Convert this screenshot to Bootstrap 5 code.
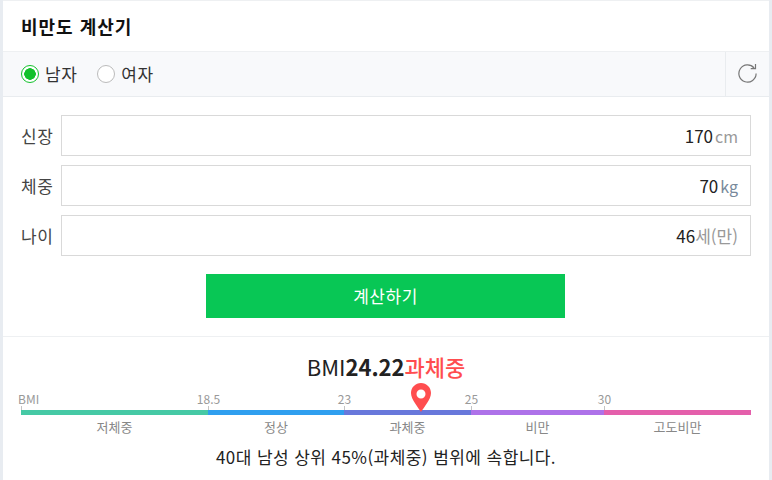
<!DOCTYPE html>
<html lang="ko">
<head>
<meta charset="utf-8">
<title>비만도 계산기</title>
<link href="https://cdn.jsdelivr.net/npm/bootstrap@5.3.0/dist/css/bootstrap.min.css" rel="stylesheet">
<style>
html,body{height:480px;overflow:hidden}
body{background:#e8ecf1;font-family:"Noto Sans CJK KR","Noto Sans",sans-serif;color:#222;padding:0 3px}
.calc{background:#fff;border-top:1px solid #eef0f2;height:481px}
.calc-head{height:50px;padding:0 18px;border-bottom:1px solid #eef0f2;box-sizing:content-box}
.calc-title{margin:0;font-size:18px;letter-spacing:1px;font-weight:700;line-height:50px;color:#111}
.calc-bar{height:45px;background:#f8f9fb;border-bottom:1px solid #e9ecef}
.calc-radios{padding-left:18px;gap:20px}
.calc-radios .form-check{margin:0;padding:0;min-height:0;display:flex;align-items:center;gap:6px}
.calc-radios .form-check-input{float:none;margin:0;width:18px;height:18px;border:1px solid #bbb;background-color:#fff;box-shadow:none}
.calc-radios .form-check-input:checked{border-color:#12c12b;background-color:#fff;background-image:radial-gradient(circle at center,#12c12b 0,#12c12b 5.5px,transparent 6px)}
.calc-radios .form-check-label{font-size:17px;letter-spacing:.5px;line-height:20px;color:#333}
.calc-reset{width:44px;border:0;border-left:1px solid #e9ecef;background:none;padding:0}
.calc-form{padding:18px 18px 0;gap:9px}
.calc-label{width:40px;flex:none;font-size:17px;letter-spacing:.5px;color:#444;margin:0;padding-top:1px}
.calc-field{flex:1;height:41px;border:1px solid #d9d9d9;padding:0 12px 0 0;gap:2px;background:#fff}
.calc-field input{flex:1;min-width:0;border:0;outline:0;padding:0;text-align:right;font-size:17px;color:#222;background:none;box-shadow:none;border-radius:0}
.calc-unit{font-size:16px;color:#999}
.calc-unit-blue{color:#78899b}
.calc-unit-age{font-size:17px;margin-left:-2px}
.calc-submit{width:359px;height:44px;background:#08c755;color:#fff;border:0;border-radius:0;font-size:17px;letter-spacing:.5px;padding:0}
.calc-submit:hover{background:#08c755;color:#fff}
.calc-actions{margin-top:18px;padding:0 1px 18px 0;border-bottom:1px solid #eef0f2}
.calc-result{padding:0 18px}
.calc-bmi{margin:16px 0 0;font-size:22px;line-height:26px;font-weight:400;color:#222}
.calc-bmi b{font-weight:700}
.calc-bmi em{font-style:normal;font-weight:500;color:#ff4d4f}
.scale{position:relative;margin-top:11px}
.scale-cell{flex:none}
.scale-tick{height:20px;font-size:12px;line-height:14px;color:#999;border-left:1px solid #c4c4c4;padding:0}
.scale-tick span{display:inline-block;transform:translateX(-50%);margin-left:-.5px;background:#fff;height:16px;padding-top:2px}
.scale-tick .scale-first{transform:translateX(-3px);margin-left:-1px}
.scale-line{height:5px}
.scale-name{font-size:13px;line-height:16px;color:#888;margin-top:4px;text-align:center}
.c1{background:#46c9a5}.c2{background:#2f9fef}.c3{background:#6878db}.c4{background:#ae72e9}.c5{background:#e45fab}
.scale-pin{position:absolute;left:390px;top:-7px;width:20px;height:29px}
.calc-note{margin:11px 0 0;font-size:17px;letter-spacing:.43px;line-height:22px;color:#222}
</style>
</head>
<body>
<main class="calc">
  <header class="calc-head"><h1 class="calc-title">비만도 계산기</h1></header>
  <div class="calc-bar d-flex justify-content-between">
    <div class="calc-radios d-flex align-items-center">
      <div class="form-check"><input class="form-check-input" type="radio" name="sex" id="m" checked><label class="form-check-label" for="m">남자</label></div>
      <div class="form-check"><input class="form-check-input" type="radio" name="sex" id="f"><label class="form-check-label" for="f">여자</label></div>
    </div>
    <button class="calc-reset d-flex align-items-center justify-content-center" type="button" aria-label="초기화">
      <svg width="20" height="20" viewBox="0.5 1 20 20" fill="none" stroke="#777" stroke-width="1.2"><path d="M16.6 5A8.6 8.6 0 1 0 18.6 10.5"/><path d="M18 0.8V5.6H13.2"/></svg>
    </button>
  </div>
  <form class="calc-form d-flex flex-column">
    <div class="d-flex align-items-center"><label class="calc-label" for="h">신장</label><div class="calc-field d-flex align-items-center"><input class="form-control" id="h" value="170"><span class="calc-unit">cm</span></div></div>
    <div class="d-flex align-items-center"><label class="calc-label" for="w">체중</label><div class="calc-field d-flex align-items-center"><input class="form-control" id="w" value="70"><span class="calc-unit calc-unit-blue">kg</span></div></div>
    <div class="d-flex align-items-center"><label class="calc-label" for="a">나이</label><div class="calc-field d-flex align-items-center"><input class="form-control" id="a" value="46"><span class="calc-unit calc-unit-age">세(만)</span></div></div>
  </form>
  <div class="calc-actions text-center"><button class="btn calc-submit" type="button">계산하기</button></div>
  <section class="calc-result text-center">
    <h2 class="calc-bmi">BMI<b>24.22</b><em>과체중</em></h2>
    <div class="scale d-flex">
      <div class="scale-cell" style="width:187px"><div class="scale-tick text-start"><span class="scale-first">BMI</span></div><div class="scale-line c1"></div><div class="scale-name">저체중</div></div>
      <div class="scale-cell" style="width:136px"><div class="scale-tick text-start"><span>18.5</span></div><div class="scale-line c2"></div><div class="scale-name">정상</div></div>
      <div class="scale-cell" style="width:127px"><div class="scale-tick text-start"><span>23</span></div><div class="scale-line c3"></div><div class="scale-name">과체중</div></div>
      <div class="scale-cell" style="width:133px"><div class="scale-tick text-start"><span>25</span></div><div class="scale-line c4"></div><div class="scale-name">비만</div></div>
      <div class="scale-cell" style="width:147px"><div class="scale-tick text-start"><span>30</span></div><div class="scale-line c5"></div><div class="scale-name">고도비만</div></div>
      <svg class="scale-pin" viewBox="0 0 20 29" aria-hidden="true"><path fill="#ff4d4f" fill-rule="evenodd" d="M10 0C4.500 0 0 4.400 0 9.900 0 16.500 7.500 24.500 10 29 12.500 24.500 20 16.500 20 9.900 20 4.400 15.500 0 10 0ZM10 6.500A4.500 4.500 0 1 1 10 15.500 4.500 4.500 0 0 1 10 6.500Z"/></svg>
    </div>
    <p class="calc-note">40대 남성 상위 45%(과체중) 범위에 속합니다.</p>
  </section>
</main>
<script src="https://cdn.jsdelivr.net/npm/bootstrap@5.3.0/dist/js/bootstrap.bundle.min.js"></script>
</body>
</html>
